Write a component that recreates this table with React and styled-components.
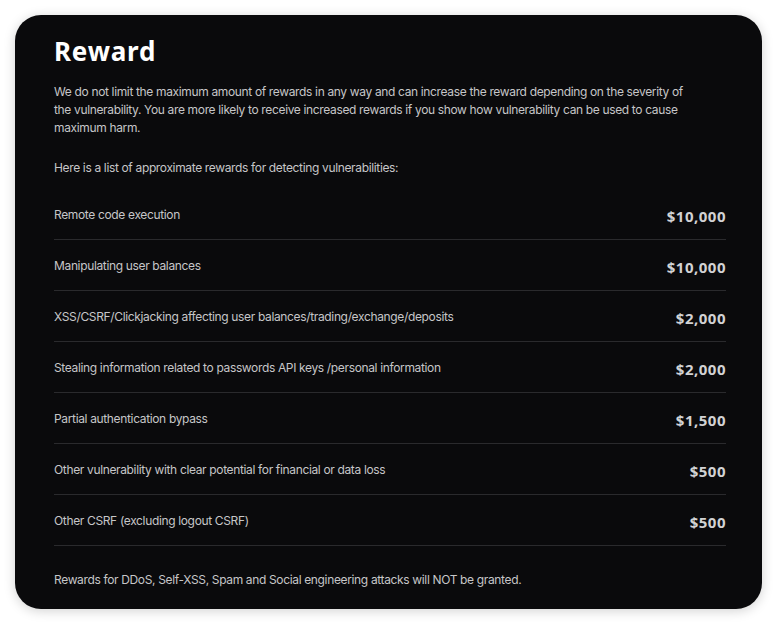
import React from 'react';
import styled, { createGlobalStyle } from 'styled-components';

const rewards = [
  { title: 'Remote code execution', amount: '$10,000' },
  { title: 'Manipulating user balances', amount: '$10,000' },
  { title: 'XSS/CSRF/Clickjacking affecting user balances/trading/exchange/deposits', amount: '$2,000' },
  { title: 'Stealing information related to passwords API keys /personal information', amount: '$2,000' },
  { title: 'Partial authentication bypass', amount: '$1,500' },
  { title: 'Other vulnerability with clear potential for financial or data loss', amount: '$500' },
  { title: 'Other CSRF (excluding logout CSRF)', amount: '$500' },
];

const App = () => (
  <>
    <GlobalStyle />
    <Page>
      <Card>
        <Title>Reward</Title>
        <Text>
          We do not limit the maximum amount of rewards in any way and can increase the reward depending on the severity of
          the vulnerability. You are more likely to receive increased rewards if you show how vulnerability can be used to cause
          maximum harm.
        </Text>
        <Text>Here is a list of approximate rewards for detecting vulnerabilities:</Text>
        <List>
          {rewards.map((r) => (
            <Row key={r.title}>
              <span>{r.title}</span>
              <Amount>{r.amount}</Amount>
            </Row>
          ))}
        </List>
        <Footer>Rewards for DDoS, Self-XSS, Spam and Social engineering attacks will NOT be granted.</Footer>
      </Card>
    </Page>
  </>
);

export default App;

const GlobalStyle = createGlobalStyle`
  body {
    margin: 0;
    background: #ffffff;
    font-family: Inter, "Liberation Sans", sans-serif;
  }
`;

const Page = styled.div`
  padding: 15px 16px 15px 15px;
`;

const Card = styled.div`
  width: 747px;
  height: 594px;
  box-sizing: border-box;
  background: #0a0a0c;
  border-radius: 26px;
  box-shadow: 0 2px 12px rgba(0, 0, 0, 0.18);
  padding: 20px 36px 0 39px;
  color: #c6c6c8;
  letter-spacing: -0.35px;
`;

const Title = styled.h1`
  margin: 0 0 16px;
  font-family: "Noto Sans", "Open Sans", sans-serif;
  font-weight: 700;
  font-size: 26px;
  line-height: 32px;
  color: #ffffff;
  letter-spacing: 0.8px;
`;

const Text = styled.p`
  margin: 0 0 22px;
  font-size: 12px;
  line-height: 18px;
  width: 636px;
`;

const List = styled.div`
  margin-top: -10px;
  display: flex;
  flex-direction: column;
`;

const Row = styled.div`
  display: flex;
  justify-content: space-between;
  align-items: center;
  height: 50px;
  border-bottom: 1px solid #2a2a2d;
  font-size: 12px;
`;

const Amount = styled.span`
  font-family: "Noto Sans", "Open Sans", sans-serif;
  font-weight: 700;
  font-size: 15px;
  letter-spacing: 0.5px;
  color: #d2d2d4;
  padding-top: 4px;
`;

const Footer = styled.p`
  margin: 25px 0 0;
  font-size: 12px;
  line-height: 18px;
`;
